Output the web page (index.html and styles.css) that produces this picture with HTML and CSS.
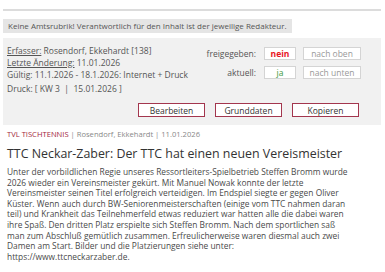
FILE: index.html
```html
<!DOCTYPE html>
<html lang="de">
<head>
    <meta charset="UTF-8">
    <title>TTC Neckar-Zaber</title>
    <link rel="stylesheet" href="styles.css">
</head>
<body>
    <div class="page">
        <div class="topline"></div>
        <div class="notice">Keine Amtsrubrik! Verantwortlich für den Inhalt ist der jeweilige Redakteur.</div>

        <div class="panel">
            <div class="panel-top">
                <div class="info">
                    <div><span class="label">Erfasser:</span> Rosendorf, Ekkehardt [138]</div>
                    <div><span class="label">Letzte Änderung:</span> 11.01.2026</div>
                    <div>Gültig: 11.1.2026 - 18.1.2026: Internet + Druck</div>
                    <div class="druck">Druck: [ KW 3 &nbsp;|&nbsp; 15.01.2026 ]</div>
                </div>
                <div class="status">
                    <span class="status-label">freigegeben:</span>
                    <span class="box no">nein</span>
                    <span class="box move">nach oben</span>
                    <span class="status-label">aktuell:</span>
                    <span class="box yes">ja</span>
                    <span class="box move">nach unten</span>
                </div>
            </div>
            <div class="actions">
                <button class="btn">Bearbeiten</button>
                <button class="btn">Grunddaten</button>
                <button class="btn">Kopieren</button>
            </div>
        </div>

        <div class="byline"><span class="rubric">TVL TISCHTENNIS</span> | Rosendorf, Ekkehardt | 11.01.2026</div>
        <h1 class="title">TTC Neckar-Zaber: Der TTC hat einen neuen Vereismeister</h1>
        <p class="text">Unter der vorbildlichen Regie unseres Ressortleiters-Spielbetrieb Steffen Bromm wurde<br>
            2026 wieder ein Vereinsmeister gekürt. Mit Manuel Nowak konnte der letzte<br>
            Vereinsmeister seinen Titel erfolgreich verteidigen. Im Endspiel siegte er gegen Oliver<br>
            Küster. Wenn auch durch BW-Seniorenmeisterschaften (einige vom TTC nahmen daran<br>
            teil) und Krankheit das Teilnehmerfeld etwas reduziert war hatten alle die dabei waren<br>
            ihre Spaß. Den dritten Platz erspielte sich Steffen Bromm. Nach dem sportlichen saß<br>
            man zum Abschluß gemütlich zusammen. Erfreulicherweise waren diesmal auch zwei<br>
            Damen am Start. Bilder und die Platzierungen siehe unter:<br>
            https://www.ttcneckarzaber.de.</p>
    </div>
</body>
</html>
```

FILE: styles.css
```css
body {
    margin: 0;
    font-family: "Open Sans", Arial, sans-serif;
    color: #555;
    background-color: #fff;
}
.page {
    padding: 0 4px 0 3px;
}
.topline {
    margin-top: 9px;
    height: 2px;
    background-color: #dcdcdc;
}
.notice {
    display: inline-block;
    margin-top: 8px;
    padding: 1px 5px;
    background-color: #e5e5e5;
    font-size: 8px;
    line-height: 12px;
    color: #555;
}
.panel {
    margin-top: 4px;
    height: 87px;
    box-sizing: border-box;
    padding: 7px 22px 0 4px;
    background-color: #f1f1f1;
    display: flex;
    flex-direction: column;
}
.panel-top {
    display: flex;
    justify-content: space-between;
}
.info {
    font-size: 8.5px;
    line-height: 12px;
    color: #555;
}
.label {
    text-decoration: underline;
}
.druck {
    margin-top: 2px;
}
.status {
    display: grid;
    grid-template-columns: auto 32px 58px;
    grid-auto-rows: 13px;
    column-gap: 7px;
    row-gap: 6px;
    align-items: center;
    margin-top: 2px;
    margin-right: -2px;
    font-size: 8.5px;
}
.status-label {
    text-align: right;
    padding-right: 1px;
}
.box {
    box-sizing: border-box;
    height: 13px;
    line-height: 11px;
    border: 1px solid #d4d4d4;
    background-color: #fff;
    text-align: center;
}
.no {
    color: #e8141e;
    font-weight: bold;
}
.yes {
    color: #3c9a3c;
}
.move {
    color: #999;
}
.actions {
    display: flex;
    justify-content: flex-end;
    gap: 10px;
    margin-top: 8px;
}
.btn {
    height: 14px;
    width: 67px;
    padding: 0;
    border: 1px solid #a3364e;
    background-color: #fff;
    font-family: "Open Sans", Arial, sans-serif;
    font-size: 8.5px;
    color: #333;
}
.byline {
    margin-top: 4px;
    padding-left: 4px;
    font-size: 7.6px;
    line-height: 11px;
    color: #888;
}
.rubric {
    color: #a3283e;
}
.title {
    margin: 5px 0 0;
    padding-left: 4px;
    font-size: 12.4px;
    line-height: 17px;
    font-weight: normal;
    color: #333;
}
.text {
    margin: 5px 0 0;
    padding-left: 4px;
    font-size: 8.4px;
    line-height: 10.6px;
    color: #4a4a4a;
    white-space: nowrap;
}
```
